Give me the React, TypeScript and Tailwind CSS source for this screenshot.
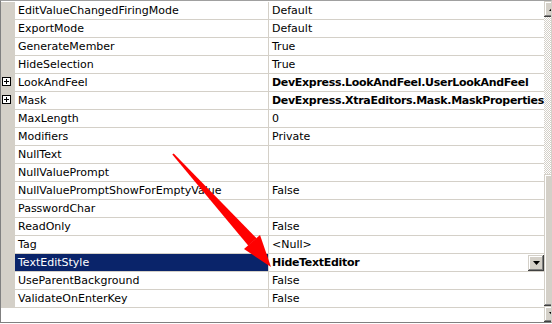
import React from "react";

type Row = { name: string; value: string; bold?: boolean; plus?: boolean; selected?: boolean };

const rows: Row[] = [
  { name: "EditValueChangedFiringMode", value: "Default" },
  { name: "ExportMode", value: "Default" },
  { name: "GenerateMember", value: "True" },
  { name: "HideSelection", value: "True" },
  { name: "LookAndFeel", value: "DevExpress.LookAndFeel.UserLookAndFeel", bold: true, plus: true },
  { name: "Mask", value: "DevExpress.XtraEditors.Mask.MaskProperties", bold: true, plus: true },
  { name: "MaxLength", value: "0" },
  { name: "Modifiers", value: "Private" },
  { name: "NullText", value: "" },
  { name: "NullValuePrompt", value: "" },
  { name: "NullValuePromptShowForEmptyValue", value: "False" },
  { name: "PasswordChar", value: "" },
  { name: "ReadOnly", value: "False" },
  { name: "Tag", value: "<Null>" },
  { name: "TextEditStyle", value: "HideTextEditor", bold: true, selected: true },
  { name: "UseParentBackground", value: "False" },
  { name: "ValidateOnEnterKey", value: "False" },
];

const bevel =
  "bg-[#d4d0c8] shadow-[inset_-1px_-1px_#404040,inset_1px_1px_#d4d0c8,inset_-2px_-2px_#808080,inset_2px_2px_#ffffff]";

function Tri({ up }: { up?: boolean }) {
  return (
    <svg width="7" height="4" viewBox="0 0 7 4">
      {up ? <polygon points="0,4 7,4 3.5,0" fill="#000" /> : <polygon points="0,0 7,0 3.5,4" fill="#000" />}
    </svg>
  );
}

function PlusBox() {
  return (
    <svg width="9" height="9" viewBox="0 0 9 9" className="block">
      <rect x="0.5" y="0.5" width="8" height="8" fill="#fff" stroke="#000" />
      <line x1="2" y1="4.5" x2="7" y2="4.5" stroke="#000" />
      <line x1="4.5" y1="2" x2="4.5" y2="7" stroke="#000" />
    </svg>
  );
}

export default function App() {
  return (
    <div className="relative w-[552px] h-[323px] bg-white border-l border-t border-b border-r border-l-[#808080] border-t-[#a0a0a0] border-b-[#808080] border-r-[#d4d0c8] flex overflow-hidden text-[11px] text-black [font-family:'DejaVu_Sans',sans-serif]">
      <div className="flex-1 flex flex-col pt-px">
        {rows.map((r) => (
          <div key={r.name} className="flex h-[18px]">
            <div className="w-[14px] bg-[#d4d0c8] shrink-0 flex items-start">
              {r.plus && (
                <div className="ml-px mt-[3px]">
                  <PlusBox />
                </div>
              )}
            </div>
            <div
              className={
                "w-[253px] shrink-0 border-b border-[#d4d0c8] pl-[3px] pt-px leading-[16px] whitespace-nowrap overflow-hidden " +
                (r.selected ? "bg-[#0a246a] text-white" : "")
              }
            >
              {r.name}
            </div>
            <div className="w-px bg-[#d4d0c8] shrink-0" />
            <div className="flex-1 min-w-0 flex border-b border-[#d4d0c8]">
              <div
                className={
                  "flex-1 min-w-0 pl-[3px] pt-px leading-[16px] whitespace-nowrap overflow-hidden " +
                  (r.bold ? "font-bold tracking-[-0.3px]" : "")
                }
              >
                {r.value}
              </div>
              {r.selected && (
                <div className={"w-[16px] h-[16px] mt-px flex items-center justify-center " + bevel}>
                  <Tri />
                </div>
              )}
            </div>
          </div>
        ))}
        <div className="flex-1 bg-white" />
      </div>
      <div className="w-[16px] shrink-0 flex flex-col">
        <div className={"h-[16px] flex items-center justify-center " + bevel}>
          <Tri up />
        </div>
        <div className="h-[157px] bg-[repeating-conic-gradient(#d4d0c8_0_25%,#ffffff_0_50%)] bg-[length:2px_2px]" />
        <div className={"h-[132px] " + bevel} />
        <div className={"h-[16px] flex items-center justify-center " + bevel}>
          <Tri />
        </div>
      </div>
      <svg
        className="absolute left-0 top-0 pointer-events-none"
        width="552"
        height="324"
        viewBox="-1 -1 552 324"
      >
        <polygon points="170.3,152.6 171.7,151.4 254.6,236.3 246.4,243.7" fill="#ff0000" />
        <polygon points="269,265 258,233 242,247" fill="#ff0000" />
      </svg>
    </div>
  );
}
